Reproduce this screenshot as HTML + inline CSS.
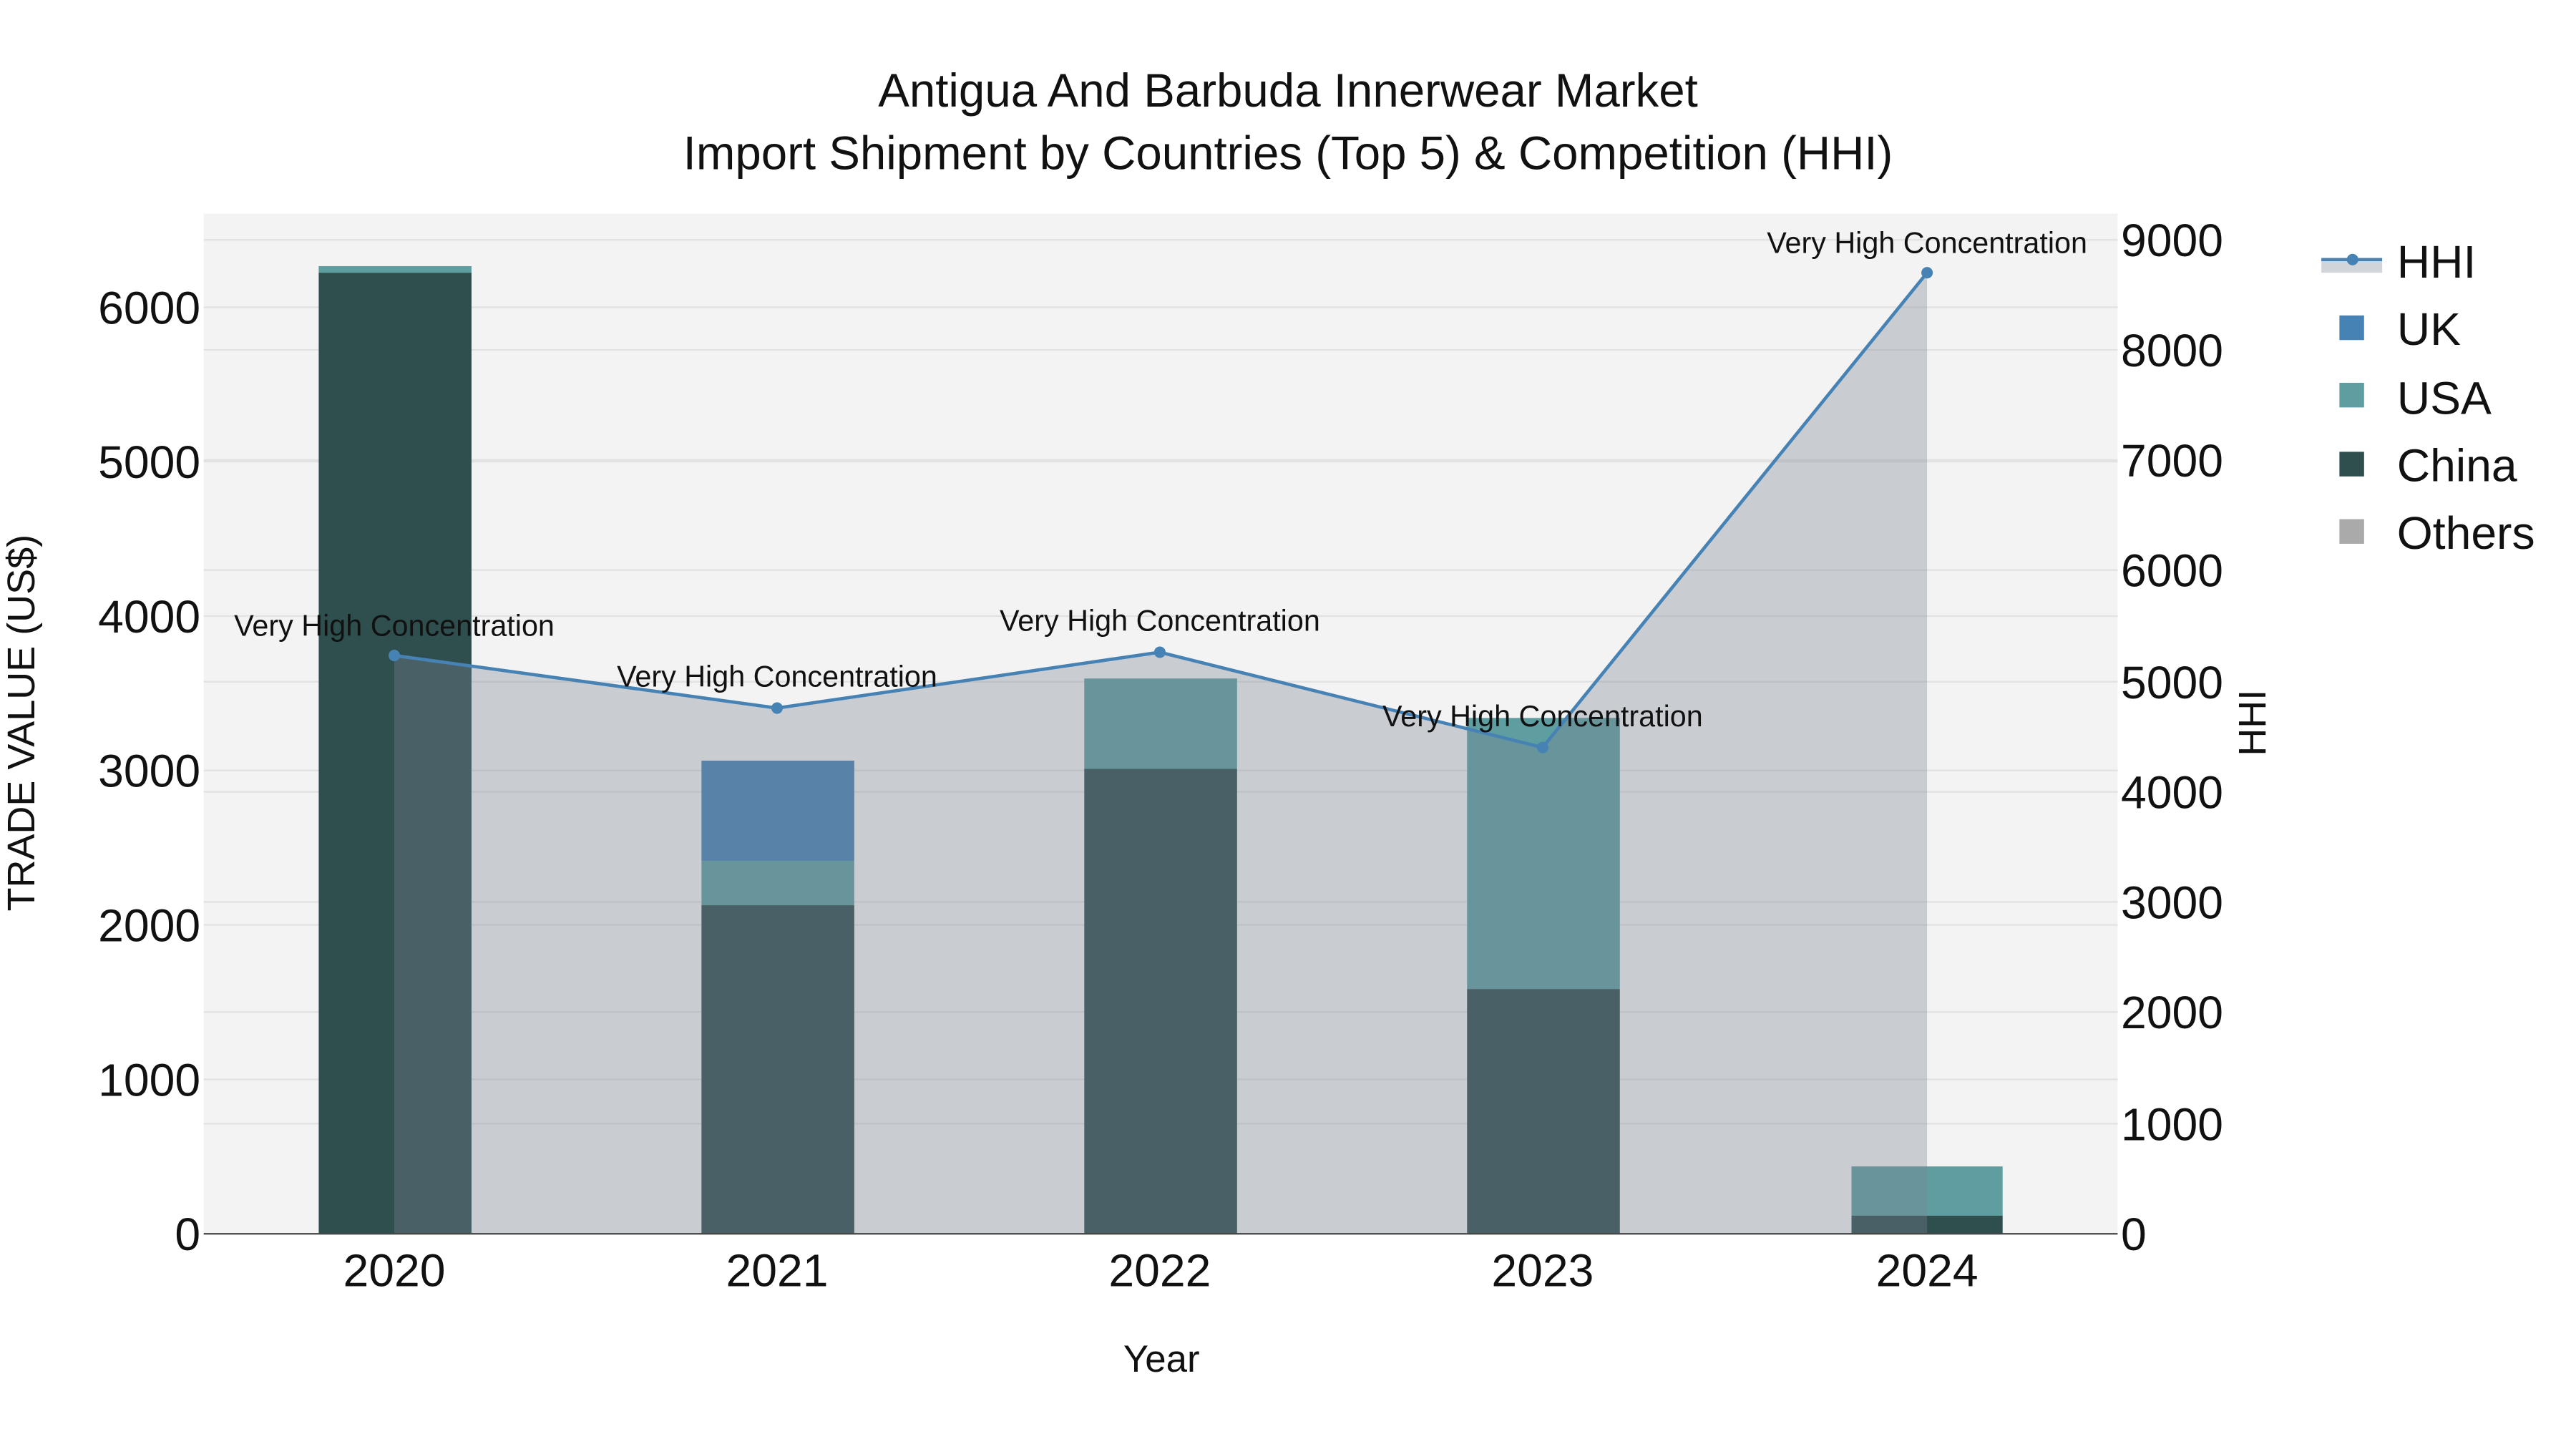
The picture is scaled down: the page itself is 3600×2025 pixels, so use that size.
<!DOCTYPE html>
<html><head><meta charset="utf-8"><style>
html,body{margin:0;padding:0;background:#fff;}
svg{display:block;}
text{font-family:"Liberation Sans",Arial,sans-serif;fill:#111;}
</style></head><body>
<svg width="3600" height="2025" viewBox="0 0 1568 882" xmlns="http://www.w3.org/2000/svg">
<rect width="1568" height="882" fill="#fff"/>
<rect x="124" y="130" width="1165" height="621" fill="#f3f3f3"/>
<g stroke="#e2e2e2" stroke-width="1">
<line x1="124" x2="1289" y1="657" y2="657"/><line x1="124" x2="1289" y1="563" y2="563"/>
<line x1="124" x2="1289" y1="469" y2="469"/><line x1="124" x2="1289" y1="375" y2="375"/>
<line x1="124" x2="1289" y1="281" y2="281"/><line x1="124" x2="1289" y1="187" y2="187"/>
<line x1="124" x2="1289" y1="684" y2="684"/><line x1="124" x2="1289" y1="616" y2="616"/>
<line x1="124" x2="1289" y1="549" y2="549"/><line x1="124" x2="1289" y1="482" y2="482"/>
<line x1="124" x2="1289" y1="415" y2="415"/><line x1="124" x2="1289" y1="347" y2="347"/>
<line x1="124" x2="1289" y1="280" y2="280"/><line x1="124" x2="1289" y1="213" y2="213"/>
<line x1="124" x2="1289" y1="146" y2="146"/>
</g>
<rect x="194" y="162" width="93" height="4" fill="#5f9ea0"/>
<rect x="194" y="166" width="93" height="585" fill="#2f4f4f"/>
<rect x="427" y="463" width="93" height="61" fill="#4682b4"/>
<rect x="427" y="524" width="93" height="27" fill="#5f9ea0"/>
<rect x="427" y="551" width="93" height="200" fill="#2f4f4f"/>
<rect x="660" y="413" width="93" height="55" fill="#5f9ea0"/>
<rect x="660" y="468" width="93" height="283" fill="#2f4f4f"/>
<rect x="893" y="437" width="93" height="165" fill="#5f9ea0"/>
<rect x="893" y="602" width="93" height="149" fill="#2f4f4f"/>
<rect x="1127" y="710" width="92" height="30" fill="#5f9ea0"/>
<rect x="1127" y="740" width="92" height="11" fill="#2f4f4f"/>
<polygon points="240,399 473,431 706,397 939,455 1173,166 1173,751 240,751" fill="rgba(122,131,147,0.35)"/>
<polyline points="240,399 473,431 706,397 939,455 1173,166" fill="none" stroke="#4682b4" stroke-width="2"/>
<g fill="#4682b4"><circle cx="240" cy="399" r="3.5"/><circle cx="473" cy="431" r="3.5"/><circle cx="706" cy="397" r="3.5"/><circle cx="939" cy="455" r="3.5"/><circle cx="1173" cy="166" r="3.5"/></g>
<line x1="124" x2="1289" y1="751" y2="751" stroke="#444" stroke-width="1"/>
<g font-size="18" text-anchor="middle">
<text x="240" y="387">Very High Concentration</text>
<text x="473" y="418">Very High Concentration</text>
<text x="706" y="384">Very High Concentration</text>
<text x="939" y="442">Very High Concentration</text>
<text x="1173" y="154">Very High Concentration</text>
</g>
<g font-size="28.5" text-anchor="middle">
<text x="784" y="65">Antigua And Barbuda Innerwear Market</text>
<text x="784" y="103">Import Shipment by Countries (Top 5) &amp; Competition (HHI)</text>
</g>
<g font-size="28" text-anchor="end">
<text x="122" y="761">0</text><text x="122" y="667">1000</text><text x="122" y="573">2000</text>
<text x="122" y="479">3000</text><text x="122" y="385">4000</text><text x="122" y="291">5000</text><text x="122" y="197">6000</text>
</g>
<g font-size="28">
<text x="1291" y="761">0</text><text x="1291" y="694">1000</text><text x="1291" y="626">2000</text>
<text x="1291" y="559">3000</text><text x="1291" y="492">4000</text><text x="1291" y="425">5000</text>
<text x="1291" y="357">6000</text><text x="1291" y="290">7000</text><text x="1291" y="223">8000</text><text x="1291" y="156">9000</text>
</g>
<g font-size="28" text-anchor="middle">
<text x="240" y="783">2020</text><text x="473" y="783">2021</text><text x="706" y="783">2022</text><text x="939" y="783">2023</text><text x="1173" y="783">2024</text>
</g>
<text x="707" y="835" font-size="23" text-anchor="middle">Year</text>
<text transform="translate(21,440) rotate(-90)" font-size="23.5" text-anchor="middle">TRADE VALUE (US$)</text>
<text transform="translate(1379,440) rotate(-90)" font-size="23.5" text-anchor="middle">HHI</text>
<rect x="1413" y="158" width="37" height="8" fill="rgba(122,131,147,0.35)"/>
<line x1="1413" x2="1450" y1="158" y2="158" stroke="#4682b4" stroke-width="2"/>
<circle cx="1432" cy="158" r="3.5" fill="#4682b4"/>
<rect x="1424" y="192" width="15" height="15" fill="#4682b4"/>
<rect x="1424" y="233" width="15" height="15" fill="#5f9ea0"/>
<rect x="1424" y="275" width="15" height="15" fill="#2f4f4f"/>
<rect x="1424" y="316" width="15" height="15" fill="#aaaaaa"/>
<g font-size="28">
<text x="1459" y="169">HHI</text><text x="1459" y="210">UK</text><text x="1459" y="252">USA</text>
<text x="1459" y="293">China</text><text x="1459" y="334">Others</text>
</g>
</svg>
</body></html>
